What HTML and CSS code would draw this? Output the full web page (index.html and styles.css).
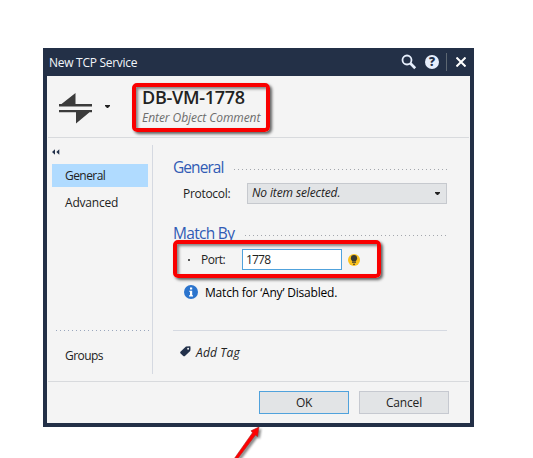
FILE: index.html
```html
<!DOCTYPE html>
<html lang="en">
<head>
<meta charset="utf-8">
<title>New TCP Service</title>
<link rel="stylesheet" href="styles.css">
</head>
<body>
<div class="dialog">
  <header class="titlebar">
    <span class="caption">New TCP Service</span>
    <svg class="search" width="16" height="16" viewBox="0 0 16 16"><circle cx="6" cy="6" r="4.5" fill="none" stroke="#e6eefc" stroke-width="1.8"/><path d="M9.3 9.3L14.2 14.2" stroke="#e6eefc" stroke-width="2.7"/></svg>
    <span class="help">?</span>
    <span class="separator"></span>
    <svg class="close" width="10" height="10" viewBox="0 0 10 10"><path d="M.5.5L9.5 9.5M9.5.5L.5 9.5" stroke="#fff" stroke-width="2"/></svg>
  </header>
  <div class="object">
    <svg class="service" width="35" height="31" viewBox="0 0 35 31"><path d="M1 11H3.5L17.5 0V11H34V13.5H1ZM1 17H34V19.3H31.5L18 30.5V19.3H1Z" fill="#3b3b3b"/></svg>
    <svg class="caret" width="5" height="3" viewBox="0 0 5 3"><path d="M0 0H5V1L3 3H2L0 1Z" fill="#222"/></svg>
    <div class="identity">
      <div class="name">DB-VM-1778</div>
      <div class="comment">Enter Object Comment</div>
    </div>
  </div>
  <div class="body">
    <nav class="sidebar">
      <svg class="collapse" width="8" height="6" viewBox="0 0 8 6"><path d="M0 3L3 .3V5.7ZM4.3 3L7.3 .3V5.7Z" fill="#22304a"/></svg>
      <div class="item active"><span class="tight">General</span></div>
      <div class="item">Advanced</div>
      <div class="dots nav-dots"></div>
      <div class="item groups"><span class="tight">Groups</span></div>
    </nav>
    <main class="content">
      <div class="section"><span class="heading h-general">General</span><span class="dots"></span></div>
      <div class="protocol"><label>Protocol:</label><div class="select"><span>No item selected.</span><svg width="5" height="3" viewBox="0 0 5 3"><path d="M0 0H5V1L3 3H2L0 1Z" fill="#222"/></svg></div></div>
      <div class="section match"><span class="heading h-match">Match By</span><span class="dots"></span></div>
      <div class="port"><span class="bullet"></span><label>Port:</label><div class="input">1778</div>
        <svg width="12" height="12" viewBox="0 0 12 12"><circle cx="6" cy="6" r="6" fill="#fcc21c"/><circle cx="6" cy="4.2" r="3.1" fill="#3b3a30"/><path d="M4 6H8V7.4H4ZM4 8.2H8V9.1H4ZM5 9.8H7V10.7H5Z" fill="#3b3a30"/></svg>
      </div>
      <div class="info"><svg width="14" height="14" viewBox="0 0 14 14"><circle cx="7" cy="7" r="7" fill="#2b74cd"/><path d="M6 2.5H8.2V4.5H6ZM5.2 5.7H8.2V10.3H9V11.4H5V10.3H6V6.8H5.2Z" fill="#fff"/></svg><span>Match for ‘Any’ Disabled.</span></div>
      <div class="tag"><svg width="11" height="11" viewBox="0 0 11 11"><path d="M6 0.5L10.3 0.2Q10.8 3 10.2 5L5.2 9.8Q4.2 10.8 3 9.8L.6 7.5Q-.3 6.3 .7 5.4Z" fill="#22304a"/><circle cx="8.1" cy="2.8" r="1" fill="#f4f4f4"/></svg><span>Add Tag</span></div>
    </main>
  </div>
  <footer class="actions"><div class="button primary">OK</div><div class="button">Cancel</div></footer>
</div>
<div class="callout callout-name"></div>
<div class="callout callout-port"></div>
<svg class="arrow" width="40" height="36" viewBox="0 0 40 36"><path d="M28 4L26.5 13.5L24.5 12L6.5 36H3L21.5 9.7L20 7.8Z" fill="#f00" stroke="#a22" stroke-width=".6"/></svg>
</body>
</html>
```

FILE: styles.css
```css
* { box-sizing: border-box; }
body {
  display: flow-root;
  margin: 0;
  height: 458px;
  overflow: hidden;
  position: relative;
  background: #fff;
  color: #222;
  font: 12px/16px "Open Sans", "Noto Sans", sans-serif;
  white-space: nowrap;
}
svg { display: block; flex: none; }
.dialog {
  width: 431px;
  height: 379px;
  margin: 48px 0 0 43px;
  border: solid #233047;
  border-width: 0 4px 4px;
  background: #f4f4f4;
  display: flex;
  flex-direction: column;
}
.titlebar {
  height: 28px;
  flex: none;
  display: flex;
  align-items: center;
  background: #233047;
  color: #f2f5fa;
  padding: 0 4px 0 2px;
}
.caption { letter-spacing: -.28px; margin-right: auto; padding-top: 2px; }
.search { margin-right: 8px; }
.help {
  width: 14px;
  height: 14px;
  border-radius: 50%;
  background: #e6eefc;
  color: #233047;
  font: 800 12px/14px "Open Sans", sans-serif;
  text-align: center;
}
.separator { width: 1px; height: 18px; margin: 0 9px 0 7px; background: #5d6772; }
.object {
  height: 62px;
  flex: none;
  margin: 0 1px;
  border-bottom: 1px solid #d8dadd;
  display: flex;
  align-items: flex-start;
}
.service { margin: 17px 0 0 10px; }
.caret { margin: 29px 0 0 12px; }
.identity { margin: 10px 0 0 32px; }
.name { font-size: 18px; line-height: 23px; font-weight: 600; letter-spacing: -.28px; }
.comment { color: #6d6d6d; font-style: italic; line-height: 18px; letter-spacing: -.06px; }
.body { height: 243px; display: flex; flex: none; }
.sidebar {
  width: 106px;
  height: 229px;
  margin-top: 7px;
  padding-left: 5px;
  border-right: 1px solid #d5d9e1;
  display: flex;
  flex-direction: column;
}
.collapse { margin-top: 4px; margin-bottom: 9px; }
.item {
  width: 96px;
  height: 23px;
  line-height: 23px;
  padding-left: 13px;
  margin-bottom: 4px;
  letter-spacing: -.2px;
}
.tight { letter-spacing: -.6px; }
.active { background: #b0dbff; }
.dots {
  height: 1px;
  background: repeating-linear-gradient(90deg, #a3a7ad 0 1px, transparent 1px 4px);
}
.nav-dots { margin: auto 0 13px 4px; width: 94px; background: repeating-linear-gradient(90deg, #9aa7bd 0 1px, transparent 1px 4px); }
.tight { letter-spacing: -.55px; }
.groups { margin-bottom: 7px; }
.content { width: 274px; margin-left: 20px; padding-top: 19px; }
.section { height: 24px; display: flex; align-items: center; }
.heading { font-size: 15.5px; line-height: 20px; padding-bottom: 4px; color: #315bb5; flex: none; letter-spacing: -.95px; }
.h-general { width: 61px; }
.h-match { width: 72px; letter-spacing: -.7px; }
.section .dots { flex: 1; }
.protocol { display: flex; height: 21px; margin-top: 2px; line-height: 21px; }
.protocol label { width: 74px; padding-left: 10px; letter-spacing: -.3px; }
.select {
  width: 200px;
  border: 1px solid #c6c9ce;
  background: #e2e4e6;
  font-style: italic;
  line-height: 18px;
  letter-spacing: -.12px;
  padding: 0 6px 0 4px;
  display: flex;
  justify-content: space-between;
  align-items: center;
}
.select span { padding-bottom: 1px; }
.match { margin-top: 19px; }
.port { display: flex; align-items: center; height: 21px; margin-top: 2px; }
.bullet { width: 2px; height: 2px; margin: 0 11px 0 15px; background: #555; }
.port label { width: 41px; letter-spacing: -.5px; }
.input { width: 100px; height: 21px; border: 1px solid #50a2dc; background: #fff; line-height: 19px; padding-left: 3px; margin-right: 6px; letter-spacing: -.8px; }
.info { display: flex; align-items: center; height: 20px; gap: 7px; margin: 12px 0 0 11px; color: #000; letter-spacing: -.2px; }
.info span { padding-top: 2px; }
.tag { display: flex; align-items: center; height: 44px; gap: 5px; margin-top: 28px; padding-left: 7px; border-top: 1px solid #d5d9e1; font-style: italic; letter-spacing: .15px; }
.tag svg { margin-bottom: 2px; }
.actions {
  flex: 1;
  margin: 0 1px;
  border-top: 1px solid #d8dadd;
  display: flex;
  justify-content: flex-end;
  gap: 10px;
  padding: 9px 20px 0 0;
}
.button { width: 90px; height: 23px; border: 1px solid #c6c9d0; background: #e2e4e6; text-align: center; line-height: 22px; letter-spacing: -.15px; }
.primary { border-color: #50a2dc; letter-spacing: -.4px; }
.callout { position: absolute; border: 4px solid #f90000; border-radius: 5px; box-shadow: 2px 2px 3px #0009, inset 2px 2px 3px #0007; }
.callout-name { left: 132px; top: 83px; width: 138px; height: 49px; }
.callout-port { left: 173px; top: 240px; width: 208px; height: 38px; }
.arrow { position: absolute; left: 231px; top: 423px; filter: drop-shadow(2px 2px 1px #0007); }
```
